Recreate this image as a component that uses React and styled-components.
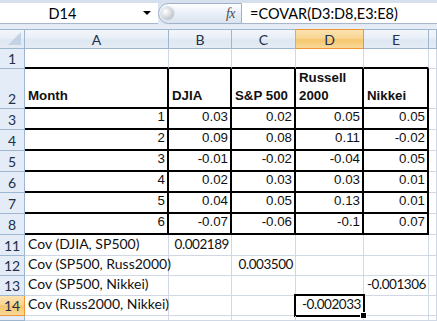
import React from "react";
import styled, { createGlobalStyle, css } from "styled-components";

const GlobalStyle = createGlobalStyle`
  html, body {
    margin: 0;
    padding: 0;
    background: #ffffff;
    overflow: hidden;
  }
`;

const Sheet = styled.div`
  width: 437px;
  height: 321px;
  display: flex;
  flex-direction: column;
  background: #ffffff;
  overflow: hidden;
`;

const FormulaBar = styled.div`
  height: 29px;
  box-sizing: border-box;
  display: flex;
  align-items: stretch;
  padding: 3px 0 5px 0;
  background: linear-gradient(#d6e0ed, #dde6f2 70%, #e8eef7);
`;

const NameBox = styled.div`
  width: 158px;
  display: flex;
  align-items: center;
  background: #ffffff;
  border-bottom: 1px solid #a7b6ca;
  font-family: Lato, "Liberation Sans", sans-serif;
  font-size: 14.5px;
  color: #000;
`;

const NameText = styled.span`
  flex: 1;
  text-align: center;
  padding-right: 18px;
`;

const Arrow = styled.span`
  width: 0;
  height: 0;
  margin-right: 7px;
  border-left: 4px solid transparent;
  border-right: 4px solid transparent;
  border-top: 4px solid #000;
`;

const FxPanel = styled.div`
  width: 84px;
  display: flex;
  align-items: center;
  justify-content: space-between;
  box-sizing: border-box;
  padding: 0 6px 0 2px;
  border: 1px solid #9fb1c9;
  border-radius: 11px 0 0 11px;
  background: linear-gradient(#fdfeff, #e9eff8 50%, #d9e3f0);
`;

const Knob = styled.span`
  width: 13px;
  height: 13px;
  border-radius: 50%;
  background: radial-gradient(circle at 35% 35%, #ffffff, #c9ced6 60%, #a9b0ba);
  box-shadow: 0 0 0 1px #dde3ea;
`;

const Fx = styled.span`
  font-family: "Liberation Serif", serif;
  font-style: italic;
  font-size: 14px;
  color: #4b4b4b;
  letter-spacing: -0.5px;
`;

const FormulaInput = styled.div`
  flex: 1;
  display: flex;
  align-items: center;
  padding-left: 8px;
  background: #ffffff;
  border-bottom: 1px solid #a7b6ca;
  font-family: Lato, "Liberation Sans", sans-serif;
  font-size: 14.5px;
  color: #000;
`;

const Grid = styled.div`
  flex: 1;
  display: grid;
  grid-template-columns: 25px 144px 63px 64px 68px 65px 1fr;
  grid-template-rows: 20px 20px 40px repeat(6, 21px) 21px 20px 20px 20px 1fr;
`;

const activeBg = "linear-gradient(#fbe3b2, #f8d592 45%, #f4c66d 55%, #f8d99a)";

const headerLook = css`
  box-sizing: border-box;
  display: flex;
  align-items: center;
  justify-content: center;
  font-family: Lato, "Liberation Sans", sans-serif;
  font-size: 14px;
  color: #22304a;
  border-right: 1px solid ${(p) => (p.$active ? "#f29536" : "#9eb6ce")};
  border-bottom: 1px solid ${(p) => (p.$active ? "#f29536" : "#9eb6ce")};
  background: ${(p) =>
    p.$active ? activeBg : "linear-gradient(#f3f6fb, #e9eff7 45%, #dfe7f2 55%, #e4ebf5)"};
`;

const Corner = styled.div`
  ${headerLook};
  position: relative;
  border-top: 1px solid #9eb6ce;
  &::after {
    content: "";
    position: absolute;
    right: 3px;
    bottom: 3px;
    width: 0;
    height: 0;
    border-left: 13px solid transparent;
    border-bottom: 13px solid #c3d2e5;
  }
`;

const ColHead = styled.div`
  ${headerLook};
  border-top: 1px solid ${(p) => (p.$active ? "#f29536" : "#9eb6ce")};
`;

const RowHead = styled.div`
  ${headerLook};
  align-items: flex-end;
  padding-bottom: 1px;
  background: ${(p) => (p.$active ? activeBg : "#e4ecf7")};
`;

const Cell = styled.div`
  box-sizing: border-box;
  position: relative;
  display: flex;
  align-items: flex-end;
  justify-content: ${(p) => (p.$align === "right" ? "flex-end" : "flex-start")};
  padding: 0 ${(p) => (p.$align === "right" ? "2px" : "0")} 2px
    ${(p) => (p.$align === "right" ? "0" : "3px")};
  border-right: ${(p) => (p.$thickRight ? "2px solid #000" : "1px solid #d0d7e5")};
  border-bottom: ${(p) => (p.$thickBottom ? "2px solid #000" : "1px solid #d0d7e5")};
  font-family: ${(p) =>
    p.$arial ? '"Liberation Sans", Arial, sans-serif' : 'Lato, "Liberation Sans", sans-serif'};
  font-size: ${(p) => (p.$arial ? "13.3px" : p.$value ? "13.5px" : "14px")};
  letter-spacing: ${(p) => (p.$value ? "-0.45px" : "normal")};
  font-weight: ${(p) => (p.$bold ? 700 : 400)};
  line-height: 18px;
  color: #111;
  white-space: ${(p) => (p.$wrap ? "pre-line" : "nowrap")};
  ${(p) =>
    p.$selected &&
    css`
      &::after {
        content: "";
        position: absolute;
        left: -2px;
        top: -2px;
        right: -2px;
        bottom: -2px;
        border: 2px solid #000;
      }
      &::before {
        content: "";
        position: absolute;
        right: -4px;
        bottom: -4px;
        width: 5px;
        height: 5px;
        background: #000;
        border: 1px solid #fff;
        z-index: 2;
      }
    `}
`;

const columns = ["A", "B", "C", "D", "E", ""];

const returns = [
  [1, "0.03", "0.02", "0.05", "0.05"],
  [2, "0.09", "0.08", "0.11", "-0.02"],
  [3, "-0.01", "-0.02", "-0.04", "0.05"],
  [4, "0.02", "0.03", "0.03", "0.01"],
  [5, "0.04", "0.05", "0.13", "0.01"],
  [6, "-0.07", "-0.06", "-0.1", "0.07"],
];

const covs = [
  { n: 11, label: "Cov (DJIA, SP500)", col: 1, value: "0.002189" },
  { n: 12, label: "Cov (SP500, Russ2000)", col: 2, value: "0.003500" },
  { n: 13, label: "Cov (SP500, Nikkei)", col: 4, value: "-0.001306" },
  { n: 14, label: "Cov (Russ2000, Nikkei)", col: 3, value: "-0.002033", selected: true },
];

const headings = ["Month", "DJIA", "S&P 500", "Russell\n2000", "Nikkei"];

function buildRows() {
  const rows = [];
  rows.push({ n: 1, label: "1", cells: columns.map(() => ({ text: "" })) });
  rows.push({
    n: 2,
    label: "2",
    cells: columns.map((_, i) => ({ text: headings[i] || "", bold: true, arial: true, wrap: true })),
  });
  returns.forEach((r, idx) => {
    rows.push({
      n: idx + 3,
      label: String(idx + 3),
      cells: columns.map((_, i) => ({
        text: i < 5 ? String(r[i]) : "",
        align: "right",
        arial: true,
      })),
    });
  });
  covs.forEach((c) => {
    rows.push({
      n: c.n,
      label: String(c.n),
      cells: columns.map((_, i) => {
        if (i === 0) return { text: c.label };
        if (i === c.col)
          return { text: c.value, align: "right", value: true, selected: c.selected };
        return { text: "" };
      }),
    });
  });
  rows.push({ n: 15, label: "", cells: columns.map(() => ({ text: "" })) });
  return rows;
}

export default function App() {
  const rows = buildRows();
  return (
    <>
      <GlobalStyle />
      <Sheet>
        <FormulaBar>
          <NameBox>
            <NameText>D14</NameText>
            <Arrow />
          </NameBox>
          <FxPanel>
            <Knob />
            <Fx>fx</Fx>
          </FxPanel>
          <FormulaInput>=COVAR(D3:D8,E3:E8)</FormulaInput>
        </FormulaBar>
        <Grid>
          <Corner />
          {columns.map((c, i) => (
            <ColHead key={i} $active={c === "D"}>
              {c}
            </ColHead>
          ))}
          {rows.map((row) => (
            <React.Fragment key={row.n}>
              <RowHead $active={row.n === 14}>{row.label}</RowHead>
              {row.cells.map((cell, i) => {
                const inTable = i < 5;
                const thickBottom = inTable && row.n >= 1 && row.n <= 8;
                const thickRight = inTable && row.n >= 2 && row.n <= 8;
                return (
                  <Cell
                    key={i}
                    $align={cell.align}
                    $bold={cell.bold}
                    $arial={cell.arial}
                    $wrap={cell.wrap}
                    $value={cell.value}
                    $selected={cell.selected}
                    $thickBottom={thickBottom}
                    $thickRight={thickRight}
                  >
                    {cell.text}
                  </Cell>
                );
              })}
            </React.Fragment>
          ))}
        </Grid>
      </Sheet>
    </>
  );
}
